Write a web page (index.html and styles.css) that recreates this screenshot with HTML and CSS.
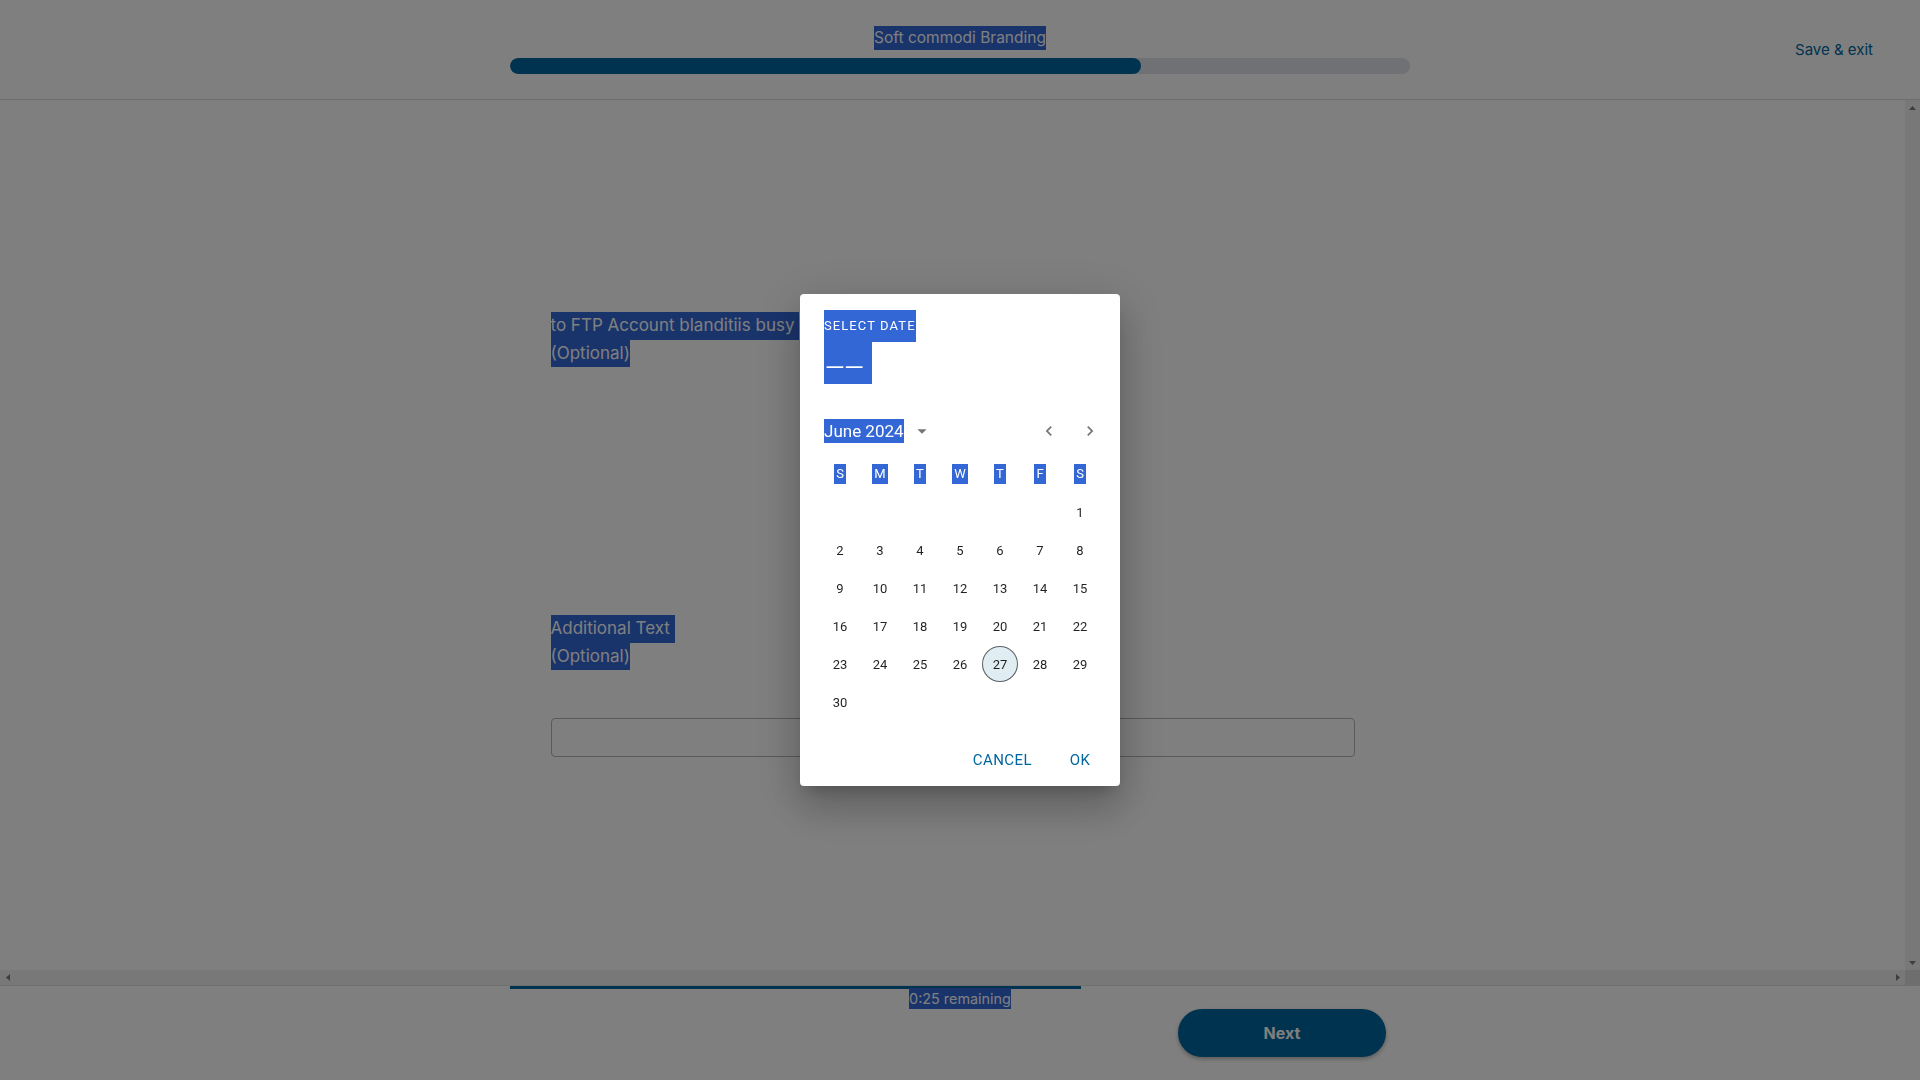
FILE: index.html
```html
<!DOCTYPE html>
<html lang="en">
<head>
<meta charset="utf-8">
<title>Soft commodi Branding</title>
<link rel="stylesheet" href="styles.css">
</head>
<body>
<div class="app">
  <header class="topbar">
    <div class="topbar-side"></div>
    <div class="topbar-center">
      <div class="course-title"><span class="sel">Soft commodi Branding</span></div>
      <div class="progress"><div class="progress-fill" style="width:70.1%"></div></div>
    </div>
    <div class="topbar-side topbar-right"><a class="save-exit" href="#">Save &amp; exit</a></div>
  </header>

  <div class="workspace">
    <main class="content">
      <div class="form-column">
        <div class="field-label first-label">
          <span class="sel">to FTP Account blanditiis busy&nbsp;</span><br>
          <span class="sel">(Optional)</span>
        </div>
        <div class="field-label second-label">
          <span class="sel">Additional Text&nbsp;</span><br>
          <span class="sel">(Optional)</span>
        </div>
        <input class="text-input" type="text" aria-label="Additional Text">
      </div>
    </main>
    <div class="vbar">
      <span class="sb-btn"><svg width="7" height="4" viewBox="0 0 7 4"><polygon points="0,4 3.5,0 7,4"/></svg></span>
      <span class="sb-btn"><svg width="7" height="4" viewBox="0 0 7 4"><polygon points="0,0 7,0 3.5,4"/></svg></span>
    </div>
    <div class="hbar">
      <span class="sb-btn"><svg width="4" height="7" viewBox="0 0 4 7"><polygon points="4,0 4,7 0,3.5"/></svg></span>
      <span class="sb-btn"><svg width="4" height="7" viewBox="0 0 4 7"><polygon points="0,0 4,3.5 0,7"/></svg></span>
    </div>
    <div class="sb-corner"></div>
  </div>

  <footer class="footer">
    <div class="footer-inner">
      <div class="time-progress"><div class="time-fill" style="width:63.4%"></div></div>
      <div class="remaining"><span class="sel">0:25 remaining</span></div>
      <div class="footer-actions"><button class="next-btn" type="button">Next</button></div>
    </div>
  </footer>
</div>

<div class="backdrop">
  <div class="dialog" role="dialog" aria-label="Select date">
    <div class="dp-toolbar">
      <span class="sel overline">Select date</span>
      <span class="sel dp-title">––</span>
    </div>
    <div class="cal-header">
      <span class="sel month-label">June 2024</span>
      <svg class="drop-icon" viewBox="0 0 24 24" width="22" height="22"><path d="M7 10l5 5 5-5z"/></svg>
      <div class="nav">
        <svg class="nav-icon" viewBox="0 0 24 24" width="20" height="20"><path d="M15.41 16.59 10.83 12l4.58-4.59L14 6l-6 6 6 6 1.41-1.41z"/></svg>
        <svg class="nav-icon" viewBox="0 0 24 24" width="20" height="20"><path d="M8.59 16.59 13.17 12 8.59 7.41 10 6l6 6-6 6-1.41-1.41z"/></svg>
      </div>
    </div>
    <div class="weekdays">
      <span class="wd"><span class="sel">S</span></span>
      <span class="wd"><span class="sel">M</span></span>
      <span class="wd"><span class="sel">T</span></span>
      <span class="wd"><span class="sel">W</span></span>
      <span class="wd"><span class="sel">T</span></span>
      <span class="wd"><span class="sel">F</span></span>
      <span class="wd"><span class="sel">S</span></span>
    </div>
    <div class="weeks">
      <div class="week">
        <span class="day empty"></span><span class="day empty"></span><span class="day empty"></span><span class="day empty"></span><span class="day empty"></span><span class="day empty"></span><span class="day">1</span>
      </div>
      <div class="week">
        <span class="day">2</span><span class="day">3</span><span class="day">4</span><span class="day">5</span><span class="day">6</span><span class="day">7</span><span class="day">8</span>
      </div>
      <div class="week">
        <span class="day">9</span><span class="day">10</span><span class="day">11</span><span class="day">12</span><span class="day">13</span><span class="day">14</span><span class="day">15</span>
      </div>
      <div class="week">
        <span class="day">16</span><span class="day">17</span><span class="day">18</span><span class="day">19</span><span class="day">20</span><span class="day">21</span><span class="day">22</span>
      </div>
      <div class="week">
        <span class="day">23</span><span class="day">24</span><span class="day">25</span><span class="day">26</span><span class="day today">27</span><span class="day">28</span><span class="day">29</span>
      </div>
      <div class="week">
        <span class="day">30</span><span class="day empty"></span><span class="day empty"></span><span class="day empty"></span><span class="day empty"></span><span class="day empty"></span><span class="day empty"></span>
      </div>
    </div>
    <div class="actions">
      <button class="text-btn" type="button">Cancel</button>
      <button class="text-btn" type="button">OK</button>
    </div>
  </div>
</div>
</body>
</html>
```

FILE: styles.css
```css
* { box-sizing: border-box; }

html, body {
  margin: 0;
  padding: 0;
  width: 1920px;
  height: 1080px;
  overflow: hidden;
  background: #ffffff;
  font-family: Inter, "Open Sans", "Liberation Sans", sans-serif;
  color: #1f2933;
}

.sel {
  display: inline-block;
  background: #3367d6;
  color: #ffffff;
}

.app {
  display: flex;
  flex-direction: column;
  height: 1080px;
}

/* ---------- top bar ---------- */
.topbar {
  display: grid;
  grid-template-columns: 1fr 900px 1fr;
  height: 100px;
  flex: none;
  border-bottom: 1px solid #dcdcdc;
}

.topbar-center {
  display: flex;
  flex-direction: column;
  padding-top: 26px;
}

.course-title {
  text-align: center;
  font-size: 15.5px;
  line-height: 24px;
  margin-bottom: 8px;
}

.progress {
  height: 16px;
  border-radius: 8px;
  background: #e0e2e8;
  overflow: hidden;
}

.progress-fill {
  height: 100%;
  border-radius: 8px;
  background: #00669e;
}

.topbar-right {
  display: flex;
  align-items: center;
  justify-content: flex-end;
  padding-right: 47px;
}

.save-exit {
  color: #00669e;
  text-decoration: none;
  font-size: 15px;
  line-height: 20px;
}

/* ---------- scrolling workspace ---------- */
.workspace {
  flex: none;
  height: 885px;
  display: grid;
  grid-template-columns: 1fr 15px;
  grid-template-rows: 1fr 15px;
}

.content {
  overflow: hidden;
}

.vbar {
  background: #f1f1f1;
  display: flex;
  flex-direction: column;
  justify-content: space-between;
}

.hbar {
  background: #f1f1f1;
  display: flex;
  justify-content: space-between;
}

.sb-btn {
  width: 15px;
  height: 15px;
  display: flex;
  align-items: center;
  justify-content: center;
}

.sb-btn svg {
  fill: #7c7c7c;
}

.sb-corner {
  background: #dcdcdc;
}

.form-column {
  width: 804px;
  margin: 0 auto;
  padding-top: 212px;
}

.field-label {
  font-size: 17px;
  line-height: 27.5px;
}

.field-label .sel {
  line-height: 27.5px;
}

.second-label {
  margin-top: 248px;
}

.text-input {
  display: block;
  width: 804px;
  height: 39px;
  margin-top: 48px;
  border: 1px solid #b4b4b4;
  border-radius: 4px;
  background: #ffffff;
  font: inherit;
}

/* ---------- footer ---------- */
.footer {
  flex: none;
  height: 95px;
  border-top: 1px solid #dedede;
}

.footer-inner {
  width: 900px;
  margin: 0 auto;
}

.time-progress {
  height: 3px;
}

.time-fill {
  height: 100%;
  background: #00669e;
}

.remaining {
  text-align: center;
  font-size: 14.4px;
  line-height: 21px;
  margin-top: -1px;
}

.footer-actions {
  display: flex;
  justify-content: flex-end;
  padding-right: 24px;
}

.next-btn {
  width: 208px;
  height: 48px;
  border: none;
  border-radius: 24px;
  background: #00669e;
  color: #ffffff;
  font-family: Inter, "Open Sans", "Liberation Sans", sans-serif;
  font-size: 16px;
  font-weight: 700;
  box-shadow: 0 2px 4px rgba(0, 0, 0, 0.3);
}

/* ---------- modal ---------- */
.backdrop {
  position: fixed;
  inset: 0;
  background: rgba(0, 0, 0, 0.5);
  display: flex;
  align-items: center;
  justify-content: center;
}

.dialog {
  width: 320px;
  height: 492px;
  background: #ffffff;
  border-radius: 4px;
  box-shadow: 0 11px 15px -7px rgba(0, 0, 0, 0.2), 0 24px 38px 3px rgba(0, 0, 0, 0.14), 0 9px 46px 8px rgba(0, 0, 0, 0.12);
  font-family: Roboto, "Liberation Sans", sans-serif;
  color: rgba(0, 0, 0, 0.87);
  display: flex;
  flex-direction: column;
}

.dp-toolbar {
  display: flex;
  flex-direction: column;
  align-items: flex-start;
  padding: 16px 24px;
}

.overline {
  font-size: 13px;
  line-height: 32px;
  letter-spacing: 0.0833em;
  text-transform: uppercase;
}

.dp-title {
  width: 48px;
  height: 42px;
  font-size: 34px;
  line-height: 33px;
  padding-top: 9px;
  letter-spacing: -3px;
  font-weight: 300;
}

.cal-header {
  display: flex;
  align-items: center;
  height: 30px;
  margin-top: 16px;
  padding-left: 24px;
}

.month-label {
  font-size: 17px;
  line-height: 24px;
}

.drop-icon {
  fill: #757575;
  margin-left: 7px;
}

.nav {
  margin-left: auto;
  margin-right: 20px;
  display: flex;
  align-items: center;
  gap: 21px;
}

.nav-icon {
  fill: #757575;
}

.weekdays {
  display: flex;
  height: 36px;
  margin-top: 10px;
  padding-left: 20px;
}

.wd {
  width: 36px;
  margin: 0 2px;
  display: flex;
  align-items: center;
  justify-content: center;
  font-size: 13px;
}

.wd .sel {
  line-height: 20px;
  padding: 0 2px;
}

.weeks {
  display: flex;
  flex-direction: column;
  gap: 2px;
  margin-top: 2px;
  padding-left: 20px;
}

.week {
  display: flex;
}

.day {
  width: 36px;
  height: 36px;
  margin: 0 2px;
  display: flex;
  align-items: center;
  justify-content: center;
  font-size: 13px;
  border-radius: 50%;
}

.day.today {
  border: 1px solid rgba(0, 0, 0, 0.6);
  background: #e0edf3;
}

.actions {
  margin-top: auto;
  display: flex;
  justify-content: flex-end;
  gap: 8px;
  padding: 8px;
}

.text-btn {
  min-width: 64px;
  height: 36px;
  padding: 6px 8px;
  border: none;
  background: transparent;
  color: #00669e;
  font-family: Roboto, "Liberation Sans", sans-serif;
  font-size: 15px;
  font-weight: 400;
  letter-spacing: 0.02857em;
  text-transform: uppercase;
}
```
